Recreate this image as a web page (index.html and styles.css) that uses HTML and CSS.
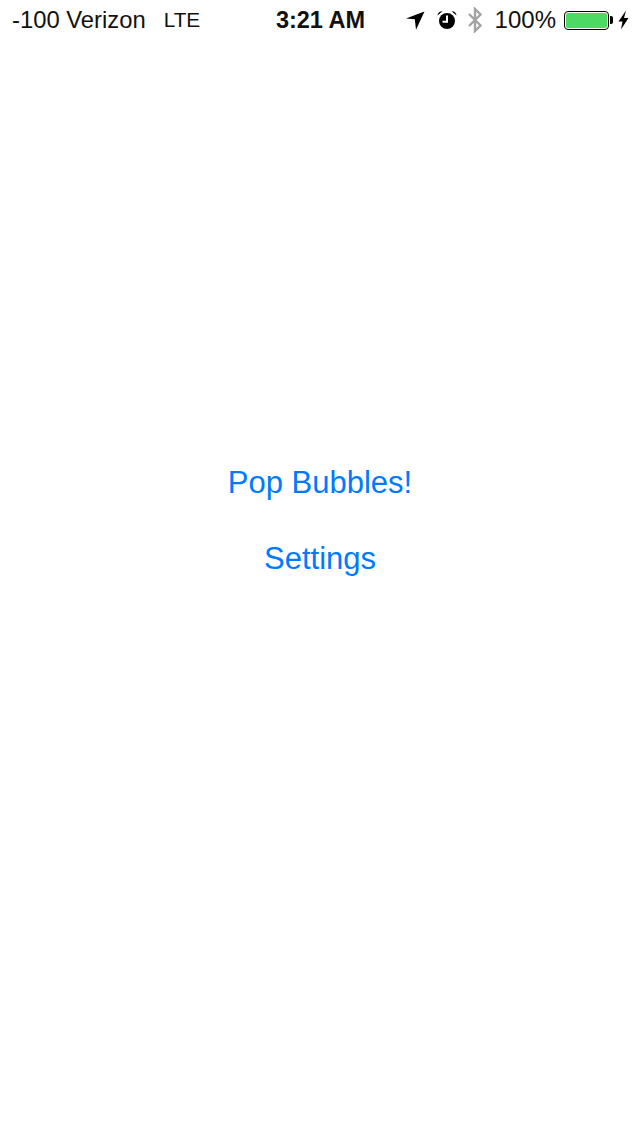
FILE: index.html
```html
<!DOCTYPE html>
<html lang="en">
  <head>
    <meta charset="utf-8">
    <meta name="viewport" content="width=device-width, initial-scale=1" />
    <title>Pop Bubbles</title>
    <link rel="stylesheet" href="styles.css">
  </head>
  <body>
    <div class="status-bar">
      <div class="status-left">
        <span class="carrier">-100 Verizon</span>
        <span class="network">LTE</span>
      </div>
      <div class="status-time">3:21 AM</div>
      <div class="status-right">
        <svg class="icon-location" width="19" height="19" viewBox="0 0 19 19">
          <path d="M18.5 0.5 L0 7.5 L8.8 8.2 L10 18.8 Z" fill="#000"/>
        </svg>
        <svg class="icon-alarm" width="20" height="20" viewBox="0 0 20 20">
          <circle cx="10" cy="11" r="8" fill="#000"/>
          <path d="M10 5.5 V11.8 H5.5" fill="none" stroke="#fff" stroke-width="2"/>
          <path d="M0.5 5.5 A4.6 4.6 0 0 1 5.5 1.2 Z M19.5 5.5 A4.6 4.6 0 0 0 14.5 1.2 Z" fill="#000"/>
        </svg>
        <svg class="icon-bluetooth" width="16" height="26" viewBox="0 0 16 26">
          <path d="M2 7 L13.5 18.5 L8 24 V2 L13.5 7.5 L2 19" fill="none" stroke="#a3a3a3" stroke-width="2.4"/>
        </svg>
        <span class="battery-text">100%</span>
        <div class="battery">
          <div class="battery-fill"></div>
        </div>
        <div class="battery-cap"></div>
        <svg class="icon-charge" width="11" height="20" viewBox="0 0 11 20">
          <path d="M8 0.5 L0.5 11.5 H4.5 L3 19.5 L10.5 8 H6 Z" fill="#000"/>
        </svg>
      </div>
    </div>
    <div class="menu">
      <a class="menu-button" href="#">Pop Bubbles!</a>
      <a class="menu-button" href="#">Settings</a>
    </div>
  </body>
</html>
```

FILE: styles.css
```css
html, body{
  margin: 0;
  height: 100%;
}

body{
  background: #fff;
  font-family: "Liberation Sans", Arial, sans-serif;
  display: flex;
  flex-direction: column;
}

.status-bar{
  height: 40px;
  padding: 0 11px 0 12px;
  display: grid;
  grid-template-columns: 1fr auto 1fr;
  align-items: center;
  font-size: 24px;
  color: #111;
}

.status-left{
  display: flex;
  gap: 18px;
  white-space: nowrap;
}

.carrier{
  font-size: 23.8px;
}

.network{
  font-size: 20.8px;
  line-height: 27px;
}

.status-time{
  font-size: 23.5px;
  font-weight: bold;
}

.status-right{
  display: flex;
  align-items: center;
  justify-content: flex-end;
  white-space: nowrap;
}

.icon-location{
  margin-right: 12px;
}

.icon-alarm{
  margin-right: 10px;
}

.icon-bluetooth{
  margin-right: 12px;
}

.battery-text{
  margin-right: 8px;
}

.battery{
  width: 45px;
  height: 19px;
  box-sizing: border-box;
  border: 1px solid #000;
  border-radius: 4px;
  padding: 1px;
}

.battery-fill{
  height: 100%;
  background: #4cd964;
  border-radius: 2px;
}

.battery-cap{
  width: 3px;
  height: 8px;
  background: #000;
  border-radius: 0 2px 2px 0;
  margin: 0 5px 0 1px;
}

.menu{
  display: flex;
  flex-direction: column;
  align-items: center;
  gap: 38px;
  padding-top: 424px;
}

.menu-button{
  color: #007aff;
  font-size: 31px;
  line-height: 38px;
  text-decoration: none;
}
```
